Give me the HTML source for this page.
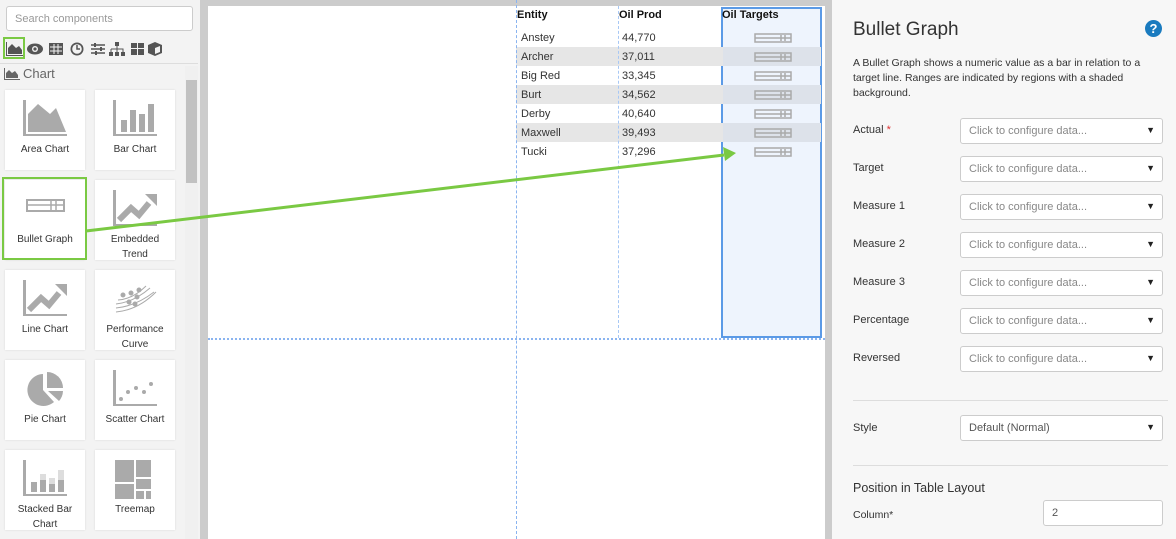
<!DOCTYPE html><html><head><style>
*{box-sizing:border-box;margin:0;padding:0}
body{width:1176px;height:539px;overflow:hidden;font-family:"Liberation Sans",sans-serif;font-size:11px;color:#333;background:#f3f3f3;position:relative}
.abs{position:absolute}
.tile{position:absolute;width:80px;height:80px;background:#fff;box-shadow:0 0 2px rgba(0,0,0,.12);text-align:center;font-size:10px;color:#333}
.tile svg{position:absolute;left:16px;top:10px}
.tile span{position:absolute;left:0;right:0;top:52px;line-height:15px}
.lbl{position:absolute;left:853px;font-size:11px;color:#333}
.sel{position:absolute;left:960px;width:203px;height:26px;border:1px solid #ccc;border-radius:3px;background:#fff;font-size:11px;color:#888;padding:6px 8px}
.sel:after{content:"▼";position:absolute;right:7px;top:6px;font-size:9px;color:#222}
.row{position:absolute;left:516px;width:305px;height:19px;font-size:11px}
</style></head><body>
<div class="abs" style="left:6px;top:6px;width:187px;height:25px;border:1px solid #ccc;border-radius:3px;background:#fff;color:#999;font-size:11px;padding:6px 8px">Search components</div>
<div class="abs" style="left:3px;top:37px;width:22px;height:22px;border:2px solid #7ac943"></div>
<svg class="abs" style="left:5px;top:40px" width="180" height="18" viewBox="0 0 180 18" fill="#555">
<path d="M1 2v14h17v-1H2V2z"/><path d="M3 14V8l4-4 4 4 3-2 3 4v4z"/>
<ellipse cx="30" cy="9" rx="8" ry="5.5"/><circle cx="30" cy="9" r="3" fill="#f3f3f3"/><circle cx="30" cy="9" r="1.6"/>
<rect x="44" y="3" width="14" height="12"/><path d="M45 7h12M45 11h12M49 4v10M53 4v10" stroke="#f3f3f3" stroke-width="1"/>
<circle cx="72" cy="9" r="6.5"/><circle cx="72" cy="9" r="4.8" fill="#f3f3f3"/><path d="M72 5v4h3" stroke="#555" stroke-width="1.5" fill="none"/>
<path d="M86 5h14M86 9h14M86 13h14" stroke="#555" stroke-width="1.5"/><rect x="89" y="3" width="2" height="4"/><rect x="95" y="7" width="2" height="4"/><rect x="90" y="11" width="2" height="4"/>
<rect x="110" y="2" width="4" height="4"/><rect x="104" y="12" width="4" height="4"/><rect x="110" y="12" width="4" height="4"/><rect x="116" y="12" width="4" height="4"/><path d="M112 6v6M106 9h12v3M106 9v3" stroke="#555" fill="none"/>
<rect x="126" y="3" width="6" height="5"/><rect x="133" y="3" width="6" height="5"/><rect x="126" y="9" width="6" height="6"/><rect x="133" y="9" width="6" height="6"/>
<path d="M150 2l7 3v8l-7 3-7-3V5z"/><path d="M150 8l5-2v6l-5 2z" fill="#f3f3f3"/>
</svg>
<div class="abs" style="left:0;top:63px;width:198px;height:1px;background:#ddd"></div>
<svg class="abs" style="left:4px;top:68px" width="16" height="12"><path d="M0 0v12h16v-1H1V0z" fill="#666"/><path d="M2 10V5l3-3 3 3 3-2 3 4v3z" fill="#666"/></svg>
<div class="abs" style="left:23px;top:66px;font-size:13px;color:#666">Chart</div>
<div class="abs" style="left:185px;top:66px;width:13px;height:473px;background:#f0f0f0"></div>
<div class="abs" style="left:186px;top:80px;width:11px;height:103px;background:#c1c1c1"></div>
<div class="tile" style="left:5px;top:90px"><svg width="50" height="40"><path d="M2 0v36h44v-2H5V0z" fill="#aaa"/><path d="M7 32V14l10-10 12 10 6-6 10 24z" fill="#aaa"/></svg><span>Area Chart</span></div>
<div class="tile" style="left:95px;top:90px"><svg width="50" height="40"><path d="M2 0v36h44v-2H5V0z" fill="#aaa"/><rect x="10" y="20" width="6" height="12" fill="#aaa"/><rect x="19" y="10" width="6" height="22" fill="#aaa"/><rect x="28" y="14" width="6" height="18" fill="#aaa"/><rect x="37" y="4" width="6" height="28" fill="#aaa"/></svg><span>Bar Chart</span></div>
<div class="tile" style="left:5px;top:180px"><svg width="50" height="40"><rect x="6" y="10" width="37" height="11" fill="none" stroke="#aaa" stroke-width="2"/><path d="M7 15h35M30 11v9M35 11v9" stroke="#aaa" stroke-width="1.5"/></svg><span>Bullet Graph</span></div>
<div class="abs" style="left:2px;top:177px;width:85px;height:83px;border:2px solid #7ac943"></div>
<div class="tile" style="left:95px;top:180px"><svg width="50" height="40"><path d="M2 0v36h44v-2H5V0z" fill="#aaa"/><path d="M8 30l12-12 8 7 10-12" stroke="#aaa" stroke-width="6" fill="none"/><path d="M34 4h12v12z" fill="#aaa"/></svg><span>Embedded<br>Trend</span></div>
<div class="tile" style="left:5px;top:270px"><svg width="50" height="40"><path d="M2 0v36h44v-2H5V0z" fill="#aaa"/><path d="M8 30l12-12 8 7 10-12" stroke="#aaa" stroke-width="6" fill="none"/><path d="M34 4h12v12z" fill="#aaa"/></svg><span>Line Chart</span></div>
<div class="tile" style="left:95px;top:270px"><svg width="50" height="40" fill="none" stroke="#aaa"><path d="M5 28q20-2 38-16M5 32q22-2 40-20M5 24q18-2 34-16M7 20q15-1 28-14"/><g fill="#aaa"><circle cx="12" cy="15" r="2"/><circle cx="20" cy="13" r="2"/><circle cx="26" cy="17" r="2"/><circle cx="18" cy="22" r="2"/><circle cx="24" cy="24" r="2"/><circle cx="28" cy="10" r="2"/></g></svg><span>Performance<br>Curve</span></div>
<div class="tile" style="left:5px;top:360px"><svg width="50" height="40"><path d="M22 4a16 16 0 1 0 11 28l-11-12z" fill="#aaa"/><path d="M26 2v16h16A16 16 0 0 0 26 2z" fill="#aaa"/><path d="M27 21h15a16 16 0 0 1-4 10z" fill="#aaa"/></svg><span>Pie Chart</span></div>
<div class="tile" style="left:95px;top:360px"><svg width="50" height="40"><path d="M2 0v36h44v-2H5V0z" fill="#aaa"/><g fill="#aaa"><circle cx="10" cy="29" r="2"/><circle cx="17" cy="22" r="2"/><circle cx="25" cy="18" r="2"/><circle cx="33" cy="22" r="2"/><circle cx="40" cy="14" r="2"/></g></svg><span>Scatter Chart</span></div>
<div class="tile" style="left:5px;top:450px"><svg width="50" height="40"><path d="M2 0v36h44v-2H5V0z" fill="#aaa"/><rect x="10" y="22" width="6" height="10" fill="#aaa"/><rect x="19" y="14" width="6" height="18" fill="#aaa"/><rect x="28" y="18" width="6" height="14" fill="#aaa"/><rect x="37" y="10" width="6" height="22" fill="#aaa"/><rect x="19" y="14" width="6" height="6" fill="#ddd"/><rect x="28" y="18" width="6" height="6" fill="#ddd"/><rect x="37" y="10" width="6" height="10" fill="#ddd"/></svg><span>Stacked Bar<br>Chart</span></div>
<div class="tile" style="left:95px;top:450px"><svg width="50" height="40"><g fill="#aaa"><rect x="4" y="0" width="19" height="22"/><rect x="25" y="0" width="15" height="17"/><rect x="25" y="19" width="15" height="10"/><rect x="4" y="24" width="19" height="15"/><rect x="25" y="31" width="8" height="8"/><rect x="35" y="31" width="5" height="8"/></g></svg><span>Treemap</span></div>
<div class="abs" style="left:200px;top:0;width:632px;height:539px;background:#ccc"></div>
<div class="abs" style="left:208px;top:6px;width:617px;height:533px;background:#fff"></div>
<div class="abs" style="left:721px;top:7px;width:101px;height:331px;background:#eef4fd;border:2px solid #5b9ae6"></div>
<div class="row" style="top:47px;background:#e6e6e6"></div>
<div class="row" style="top:85px;background:#e6e6e6"></div>
<div class="row" style="top:123px;background:#e6e6e6"></div>
<div class="abs" style="left:723px;top:47px;width:97px;height:19px;background:#dde2ea"></div>
<div class="abs" style="left:723px;top:85px;width:97px;height:19px;background:#dde2ea"></div>
<div class="abs" style="left:723px;top:123px;width:97px;height:19px;background:#dde2ea"></div>
<div class="abs" style="left:516px;top:0;height:539px;border-left:1px dashed #8ab4f0"></div>
<div class="abs" style="left:618px;top:6px;height:332px;border-left:1px dashed #a8c8f5"></div>
<div class="abs" style="left:208px;top:338px;width:617px;border-top:2px dotted #8ab4f0"></div>
<div class="abs" style="left:517px;top:9px;font-weight:bold;font-size:11px;color:#111">Entity</div>
<div class="abs" style="left:619px;top:9px;font-weight:bold;font-size:11px;color:#111">Oil Prod</div>
<div class="abs" style="left:722px;top:9px;font-weight:bold;font-size:11px;color:#111">Oil Targets</div>
<div class="abs" style="left:521px;top:29px;line-height:19px;font-size:11px">Anstey<br>Archer<br>Big Red<br>Burt<br>Derby<br>Maxwell<br>Tucki</div>
<div class="abs" style="left:622px;top:29px;line-height:19px;font-size:11px">44,770<br>37,011<br>33,345<br>34,562<br>40,640<br>39,493<br>37,296</div>
<svg class="abs" style="left:754px;top:32px" width="40" height="130"><g fill="none" stroke="#aaa" stroke-width="1.5">
<g id="b"><rect x="1" y="2" width="36" height="8"/><path d="M1 6h36M27 3v6M31 3v6"/></g>
<use href="#b" y="19"/><use href="#b" y="38"/><use href="#b" y="57"/><use href="#b" y="76"/><use href="#b" y="95"/><use href="#b" y="114"/></g></svg>
<svg class="abs" style="left:0;top:0" width="830" height="539"><path d="M86 231L724 155" stroke="#7ac943" stroke-width="3"/><path d="M736 153l-13-6 2 14z" fill="#7ac943"/></svg>
<div class="abs" style="left:832px;top:0;width:344px;height:539px;background:#f7f7f7"></div>
<div class="abs" style="left:853px;top:19px;font-size:19px;color:#333">Bullet Graph</div>
<div class="abs" style="left:1145px;top:20px;width:17px;height:17px;border-radius:50%;background:#1a7bbf;color:#fff;font-weight:bold;font-size:13px;text-align:center;line-height:17px">?</div>
<div class="abs" style="left:853px;top:56px;width:300px;font-size:10.5px;line-height:15px;color:#333">A Bullet Graph shows a numeric value as a bar in relation to a target line. Ranges are indicated by regions with a shaded background.</div>
<div class="lbl" style="top:124px">Actual <span style="color:#d33">*</span></div><div class="sel" style="top:118px">Click to configure data...</div>
<div class="lbl" style="top:162px">Target</div><div class="sel" style="top:156px">Click to configure data...</div>
<div class="lbl" style="top:200px">Measure 1</div><div class="sel" style="top:194px">Click to configure data...</div>
<div class="lbl" style="top:238px">Measure 2</div><div class="sel" style="top:232px">Click to configure data...</div>
<div class="lbl" style="top:276px">Measure 3</div><div class="sel" style="top:270px">Click to configure data...</div>
<div class="lbl" style="top:314px">Percentage</div><div class="sel" style="top:308px">Click to configure data...</div>
<div class="lbl" style="top:352px">Reversed</div><div class="sel" style="top:346px">Click to configure data...</div>
<div class="abs" style="left:853px;top:400px;width:315px;height:1px;background:#ddd"></div>
<div class="lbl" style="top:422px">Style</div><div class="sel" style="top:415px;color:#555">Default (Normal)</div>
<div class="abs" style="left:853px;top:465px;width:315px;height:1px;background:#ddd"></div>
<div class="abs" style="left:853px;top:481px;font-size:12.5px;color:#333">Position in Table Layout</div>
<div class="lbl" style="top:509px;font-size:10.5px">Column*</div>
<div class="abs" style="left:1043px;top:500px;width:120px;height:26px;border:1px solid #ccc;border-radius:3px;background:#fff;font-size:11px;color:#555;padding:6px 8px">2</div>
</body></html>
